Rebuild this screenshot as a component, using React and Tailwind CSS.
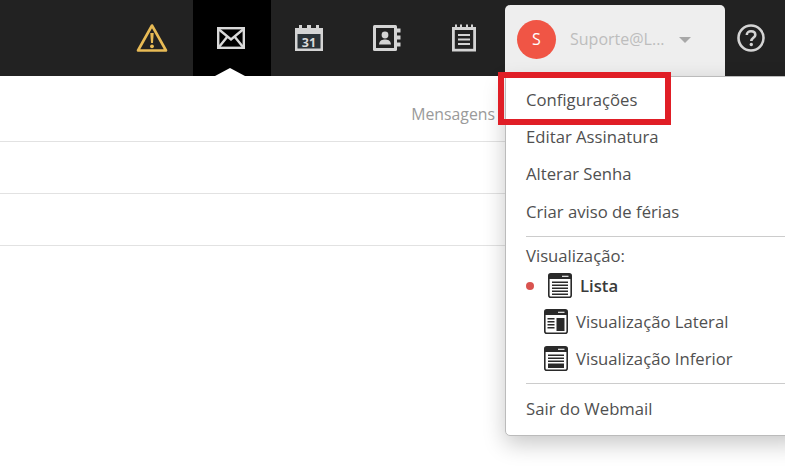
const font = { fontFamily: '"Open Sans", sans-serif' };

function Warn() {
  return (
    <svg width="32" height="30" viewBox="0 0 32 30">
      <path d="M16 2.5 L30 27.5 H2 Z" fill="none" stroke="#e8bb55" strokeWidth="2.6" strokeLinejoin="round" />
      <path d="M14.3 10 H17.7 L17 20 H15 Z" fill="#e8bb55" />
      <circle cx="16" cy="23.3" r="1.9" fill="#e8bb55" />
    </svg>
  );
}
function Mail() {
  return (
    <svg width="28" height="22" viewBox="0 0 28 22">
      <rect x="1.2" y="1.2" width="25.6" height="19.6" fill="none" stroke="#d9d9d9" strokeWidth="2.4" />
      <path d="M2 2.5 L14 12.5 L26 2.5 M2 20 L10.5 9.5 M26 20 L17.5 9.5" fill="none" stroke="#d9d9d9" strokeWidth="2.4" />
    </svg>
  );
}
function Cal() {
  return (
    <svg width="28" height="28" viewBox="0 0 28 28">
      <path d="M0 4 H4 V1 H7 V4 H12 V1 H16 V4 H21 V1 H24 V4 H28 V27 H0 Z" fill="#d4d4d4" />
      <rect x="2.5" y="10" width="23" height="14.5" fill="#2b3338" />
      <text x="14" y="22.5" textAnchor="middle" fontSize="12.5" fontWeight="700" fill="#d9d9d9" style={font}>31</text>
    </svg>
  );
}
function Contacts() {
  return (
    <svg width="28" height="28" viewBox="0 0 28 28">
      <rect x="0" y="1" width="24" height="26" rx="1.5" fill="#d4d4d4" />
      <rect x="3" y="4" width="18" height="20" fill="#222" />
      <circle cx="12" cy="11" r="3.4" fill="#d4d4d4" />
      <path d="M6 20.5 C6.5 16 9.5 15.5 12 15.5 C14.5 15.5 17.5 16 18 20.5 Z" fill="#d4d4d4" />
      <path d="M24 4.5 H27.5 V8.5 H24 Z M24 11.5 H27.5 V15.5 H24 Z M24 18.5 H27.5 V22.5 H24 Z" fill="#d4d4d4" />
    </svg>
  );
}
function Notes() {
  return (
    <svg width="24" height="28" viewBox="0 0 24 28">
      <path d="M0 3 H3 V0.5 H5 V3 H8 V0.5 H10 V3 H14 V0.5 H16 V3 H19 V0.5 H21 V3 H24 V27.5 H0 Z" fill="#d4d4d4" />
      <rect x="2.8" y="6" width="18.4" height="18.8" fill="#222" />
      <path d="M6 10 H18 V12 H6 Z M6 14.5 H18 V16.5 H6 Z M6 19 H18 V21 H6 Z" fill="#d4d4d4" />
    </svg>
  );
}
function Help() {
  return (
    <svg width="30" height="30" viewBox="0 0 30 30">
      <circle cx="15" cy="15" r="12.5" fill="none" stroke="#d4d4d4" strokeWidth="2.6" />
      <path d="M10.8 12 C10.8 9.5 12.8 8.3 15 8.3 C17.5 8.3 19.3 9.7 19.3 11.9 C19.3 14.8 15.3 14.8 15.3 18" fill="none" stroke="#d4d4d4" strokeWidth="2.6" />
      <circle cx="15.3" cy="21.5" r="1.7" fill="#d4d4d4" />
    </svg>
  );
}
function ListView({ kind }) {
  return (
    <svg width="24" height="25" viewBox="0 0 24 25">
      <rect x="0.8" y="0.8" width="22.4" height="23.4" rx="2" fill="#fff" stroke="#2a2a2a" strokeWidth="1.6" />
      <path d="M1 1 H23 V6 H1 Z" fill="#2a2a2a" />
      <path d="M14 2.7 H20.5 V4 H14 Z" fill="#ddd" />
      {kind === "list" && (
        <path d="M4 8.5 H20 V10 H4 Z M4 11.5 H20 V13 H4 Z M4 14.5 H20 V16 H4 Z M4 17.5 H20 V19 H4 Z M4 20.5 H20 V22 H4 Z" fill="#2a2a2a" />
      )}
      {kind === "side" && (
        <path d="M3.5 9 H10.5 V10.5 H3.5 Z M3.5 12 H10.5 V13.5 H3.5 Z M3.5 15 H10.5 V16.5 H3.5 Z M3.5 18 H10.5 V19.5 H3.5 Z M12.5 9 H20.5 V22 H12.5 Z" fill="#2a2a2a" />
      )}
      {kind === "bottom" && (
        <path d="M4 8.5 H20 V10 H4 Z M4 11.5 H20 V13 H4 Z M4 14.5 H20 V16 H4 Z M4 17.5 H20 V22 H4 Z" fill="#2a2a2a" />
      )}
    </svg>
  );
}

function MenuLink({ children, className = "" }) {
  return <div className={`flex items-center text-[16.7px] leading-none text-[#505050] ${className}`}>{children}</div>;
}

export default function App() {
  return (
    <div className="relative h-[476px] w-[785px] overflow-hidden bg-white" style={font}>
      <header className="flex h-[76px] justify-end bg-[#222222]">
        <div className="flex w-[78px] items-center justify-center pr-[4px]"><Warn /></div>
        <div className="relative flex w-[78px] items-center justify-center bg-black pr-[3px]">
          <div className="mb-[1px]"><Mail /></div>
          <div className="absolute bottom-0 left-[22px] h-0 w-0 border-x-[15px] border-b-[8px] border-x-transparent border-b-white" />
        </div>
        <div className="flex w-[78px] items-center justify-center pr-[3px]"><Cal /></div>
        <div className="flex w-[78px] items-center justify-center pr-[3px]"><Contacts /></div>
        <div className="flex w-[78px] items-center justify-center pr-[4px]"><Notes /></div>
        <div className="mt-[5px] flex h-[71px] w-[220px] items-center rounded-t-[5px] bg-[#eeeeee] pb-[3px] pl-[12px]">
          <div className="flex h-[39px] w-[39px] items-center justify-center rounded-full bg-[#f05545] text-[16px] text-white">S</div>
          <span className="ml-[14px] text-[16px] text-[#bdbdbd]">Suporte@L...</span>
          <div className="ml-[14px] mt-[2px] h-0 w-0 border-x-[6px] border-t-[6px] border-x-transparent border-t-[#a8a8a8]" />
        </div>
        <div className="flex w-[60px] items-center justify-center pr-[8px]"><Help /></div>
      </header>

      <main>
        <div className="relative h-[66px] border-b border-[#e2e2e2]">
          <span className="absolute right-[290px] top-[28px] text-[15.8px] leading-5 text-[#9a9a9a]">Mensagens</span>
        </div>
        <div className="h-[52px] border-b border-[#e2e2e2]" />
        <div className="h-[52px] border-b border-[#e2e2e2]" />
      </main>

      <div className="absolute left-[505px] top-[76px] h-[360px] w-[300px] rounded-b-[5px] border border-[#bbbbbb] bg-white pl-[20px] pt-[15px] shadow-[0_8px_22px_rgba(0,0,0,0.22)]">
        <MenuLink className="h-[16px]">Configurações</MenuLink>
        <MenuLink className="mt-[21px] h-[16px]">Editar Assinatura</MenuLink>
        <MenuLink className="mt-[21px] h-[16px]">Alterar Senha</MenuLink>
        <MenuLink className="mt-[22px] h-[16px]">Criar aviso de férias</MenuLink>
        <div className="mt-[16px] border-t border-[#cccccc]" />
        <MenuLink className="mt-[11px] h-[16px]">Visualização:</MenuLink>
        <div className="mt-[9px] flex h-[25px] items-center">
          <div className="h-[8px] w-[8px] rounded-full bg-[#d9534f]" />
          <div className="ml-[14px]"><ListView kind="list" /></div>
          <span className="ml-[8px] text-[16.7px] font-semibold text-[#3a3a3a]">Lista</span>
        </div>
        <div className="ml-[18px] mt-[11px] flex h-[25px] items-center">
          <ListView kind="side" />
          <span className="ml-[8px] text-[16.7px] text-[#505050]">Visualização Lateral</span>
        </div>
        <div className="ml-[18px] mt-[12px] flex h-[25px] items-center">
          <ListView kind="bottom" />
          <span className="ml-[8px] text-[16.7px] text-[#505050]">Visualização Inferior</span>
        </div>
        <div className="mt-[12px] border-t border-[#cccccc]" />
        <MenuLink className="mt-[17px] h-[16px]">Sair do Webmail</MenuLink>
      </div>

      <div className="absolute left-[498px] top-[72px] h-[53px] w-[173px] border-[6px] border-[#e01e26]" />
    </div>
  );
}
